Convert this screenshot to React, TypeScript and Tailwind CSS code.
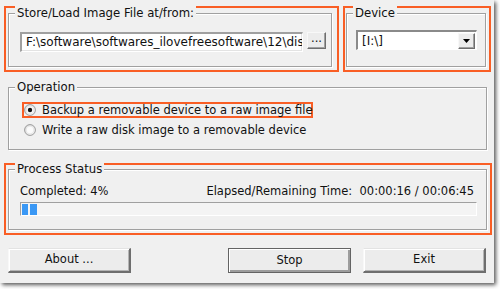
import type { ReactNode } from "react"

const ORANGE = "border-[#f95e25]"

function GroupBox({ label, className, children }: { label: string; className: string; children?: ReactNode }) {
  return (
    <div className={`relative border border-[#a0a0a0] shadow-[inset_1px_1px_0_#fff,1px_1px_0_#fff] ${className}`}>
      <span className="absolute left-[6px] -top-[8px] bg-[#f0f0f0] px-[2px] leading-[14px] text-[11.7px] whitespace-nowrap">
        {label}
      </span>
      {children}
    </div>
  )
}

function Radio({ checked }: { checked?: boolean }) {
  return (
    <svg width="12" height="12" viewBox="0 0 12 12" className="shrink-0">
      <defs>
        <linearGradient id="rg" x1="0" y1="0" x2="1" y2="1">
          <stop offset="0" stopColor="#d6d6d6" />
          <stop offset="1" stopColor="#ffffff" />
        </linearGradient>
      </defs>
      <circle cx="6" cy="6" r="5.4" fill="url(#rg)" stroke="#9a9a9a" strokeWidth="1" />
      <circle cx="6" cy="6" r="3.9" fill="#fbfbfb" stroke="#e2e2e2" strokeWidth="0.8" />
      {checked && <circle cx="6" cy="6" r="2.2" fill="#111" />}
    </svg>
  )
}

function Button({ label, primary, className }: { label: string; primary?: boolean; className: string }) {
  return (
    <div
      className={`flex items-center justify-center bg-[#ececec] ${
        primary
          ? "border border-[#646464] shadow-[inset_1px_1px_0_#fff,inset_-2px_-2px_0_#9c9c9c]"
          : "border-t border-l border-t-[#e3e3e3] border-l-[#f8f8f8] border-b-2 border-r-2 border-b-[#6e6e6e] border-r-[#6e6e6e] shadow-[inset_1px_1px_0_#fff,inset_-1px_-1px_0_#b4b4b4]"
      } ${className}`}
    >
      {label}
    </div>
  )
}

export default function App() {
  return (
    <div className="w-[500px] h-[289px] bg-white font-['DejaVu_Sans',sans-serif] text-[11.5px] text-[#111]">
      <div className="w-[494px] h-[283px] bg-[#f0f0f0] shadow-[2px_2px_4px_rgba(0,0,0,0.65)] pt-[6px] pl-[4px]">
        {/* top row */}
        <div className="flex gap-[4px]">
          <div className={`w-[335px] h-[66px] border-2 ${ORANGE} pt-[5px] pl-[2px]`}>
            <GroupBox label="Store/Load Image File at/from:" className="w-[324px] h-[54px] pt-[18px] pl-[11px] flex items-start gap-[4px]">
              <div className="w-[283px] h-[20px] bg-white border-t-2 border-l-2 border-[#a0a0a0] border-b border-r border-b-white border-r-white shadow-[inset_-1px_-1px_0_#e3e3e3] pl-[4px] overflow-hidden whitespace-nowrap leading-[16px] text-[12px]">
                {"F:\\software\\softwares_ilovefreesoftware\\12\\disk"}
              </div>
              <div className="w-[19px] h-[17px] bg-[#ececec] border-t border-l border-[#f8f8f8] border-b border-r border-b-[#6e6e6e] border-r-[#6e6e6e] shadow-[inset_-1px_-1px_0_#a0a0a0] flex items-center justify-center leading-none pb-[3px]">
                ...
              </div>
            </GroupBox>
          </div>
          <div className={`w-[148px] h-[66px] border-2 ${ORANGE} pt-[5px] pl-[1px]`}>
            <GroupBox label="Device" className="w-[140px] h-[54px] pt-[16px] pl-[9px]">
              <div className="w-[121px] h-[20px] bg-white border-t-2 border-l-2 border-t-[#8a8a8a] border-l-[#8a8a8a] border-b border-r border-b-white border-r-white flex items-center justify-between">
                <span className="pl-[4px] leading-[16px] text-[12px]">[I:\]</span>
                <div className="w-[17px] h-[16px] mr-[1px] bg-[#ececec] border-t border-l border-[#f8f8f8] border-b border-r border-b-[#6e6e6e] border-r-[#6e6e6e] shadow-[inset_-1px_-1px_0_#a0a0a0] flex items-center justify-center">
                  <svg width="7" height="4" viewBox="0 0 7 4">
                    <path d="M0 0H7L3.5 4Z" fill="#000" />
                  </svg>
                </div>
              </div>
            </GroupBox>
          </div>
        </div>

        {/* operation */}
        <GroupBox label="Operation" className="ml-[4px] mt-[15px] w-[479px] h-[63px] pt-[14px] pl-[13px]">
          <div className={`w-[291px] h-[16px] border-2 ${ORANGE} flex items-center gap-[6px]`}>
            <Radio checked />
            <span className="leading-[12px] whitespace-nowrap">Backup a removable device to a raw image file</span>
          </div>
          <div className="w-[291px] h-[16px] mt-[4px] border-2 border-transparent flex items-center gap-[6px]">
            <Radio />
            <span className="leading-[12px] whitespace-nowrap">Write a raw disk image to a removable device</span>
          </div>
        </GroupBox>

        {/* process status */}
        <div className={`mt-[13px] w-[488px] h-[72px] border-2 ${ORANGE} pt-[4px] pl-[2px]`}>
          <GroupBox label="Process Status" className="w-[479px] h-[61px] pt-[14px] pl-[11px]">
            <div className="w-[457px] h-[14px] flex justify-between items-center leading-[14px] pr-[3px]">
              <span>Completed: 4%</span>
              <span className="whitespace-pre">Elapsed/Remaining Time:  00:00:16 / 00:06:45</span>
            </div>
            <div className="mt-[4px] w-[457px] h-[14px] bg-[#f4f4f4] border-t border-l border-[#a0a0a0] border-b border-r border-b-white border-r-white flex items-center gap-[2px] pl-[1px]">
              <div className="w-[6px] h-[11px] bg-[#3a98f5]" />
              <div className="w-[7px] h-[11px] bg-[#3a98f5]" />
            </div>
          </GroupBox>
        </div>

        {/* buttons */}
        <div className="mt-[13px] flex">
          <Button label="About ..." className="ml-[4px] w-[123px] h-[25px]" />
          <Button label="Stop" primary className="ml-[97px] w-[123px] h-[25px]" />
          <Button label="Exit" className="ml-[12px] w-[123px] h-[25px]" />
        </div>
      </div>
    </div>
  )
}
